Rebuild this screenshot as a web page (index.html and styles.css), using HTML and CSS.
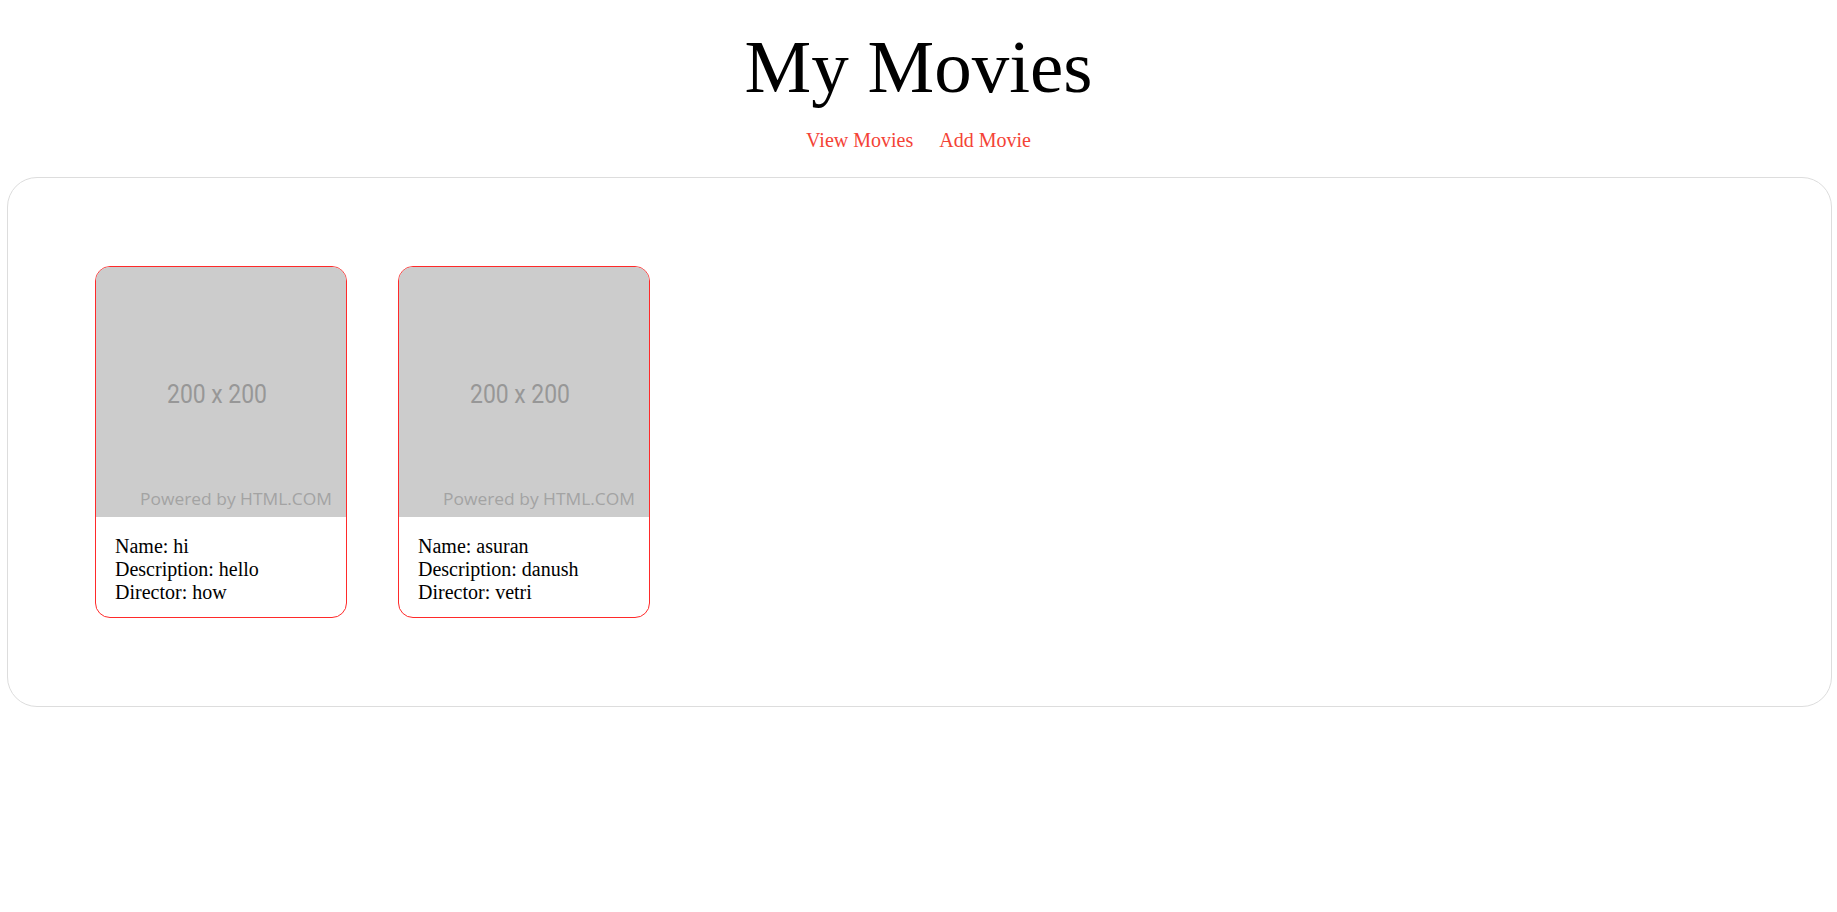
FILE: index.html
```html
<!DOCTYPE html>
<html lang="en">
<head>
<meta charset="utf-8">
<title>My Movies</title>
<link rel="stylesheet" href="styles.css">
</head>
<body>
<header class="header">
  <h1 class="title">My Movies</h1>
  <nav class="nav">
    <a class="nav-link" href="#">View Movies</a>
    <a class="nav-link" href="#">Add Movie</a>
  </nav>
</header>
<main class="panel">
  <div class="card">
    <svg class="poster" viewBox="0 0 250 250" width="250" height="250">
      <rect width="250" height="250" fill="#cccccc"/>
      <text class="ph-size" x="121" y="136" text-anchor="middle" textLength="100" lengthAdjust="spacingAndGlyphs">200 x 200</text>
      <text class="ph-brand" x="236" y="238" text-anchor="end" textLength="192" lengthAdjust="spacingAndGlyphs">Powered by HTML.COM</text>
    </svg>
    <div class="info">
      <div>Name: hi</div>
      <div>Description: hello</div>
      <div>Director: how</div>
    </div>
  </div>
  <div class="card">
    <svg class="poster" viewBox="0 0 250 250" width="250" height="250">
      <rect width="250" height="250" fill="#cccccc"/>
      <text class="ph-size" x="121" y="136" text-anchor="middle" textLength="100" lengthAdjust="spacingAndGlyphs">200 x 200</text>
      <text class="ph-brand" x="236" y="238" text-anchor="end" textLength="192" lengthAdjust="spacingAndGlyphs">Powered by HTML.COM</text>
    </svg>
    <div class="info">
      <div>Name: asuran</div>
      <div>Description: danush</div>
      <div>Director: vetri</div>
    </div>
  </div>
</main>
</body>
</html>
```
FILE: styles.css
```css
html, body {
  margin: 0;
  padding: 0;
  background: #ffffff;
}

body {
  font-family: "Liberation Serif", "Times New Roman", serif;
  color: #000000;
}

.header {
  padding-top: 24px;
  text-align: center;
}

.title {
  margin: 0;
  font-size: 75px;
  line-height: 86px;
  font-weight: normal;
}

.nav {
  margin-top: 19px;
  display: flex;
  justify-content: center;
  gap: 26px;
  font-size: 20px;
  line-height: 23px;
}

.nav-link {
  color: #f44336;
  text-decoration: none;
}

.panel {
  margin: 25px 5px 0 7px;
  border: 1px solid #dddddd;
  border-radius: 30px;
  padding: 88px 87px 88px;
  display: flex;
  gap: 51px;
  align-items: flex-start;
}

.card {
  width: 250px;
  border: 1px solid #ff2a2a;
  border-radius: 15px;
  overflow: hidden;
  background: #ffffff;
}

.poster {
  display: block;
  width: 250px;
  height: 250px;
}

.ph-size {
  font-family: Roboto, "Liberation Sans", sans-serif;
  font-size: 25px;
  fill: #979797;
}

.ph-brand {
  font-family: "Open Sans", "DejaVu Sans", sans-serif;
  font-size: 17px;
  fill: #a3a3a3;
}

.info {
  padding: 18px 19px 13px;
  font-size: 20px;
  line-height: 23px;
}
```
